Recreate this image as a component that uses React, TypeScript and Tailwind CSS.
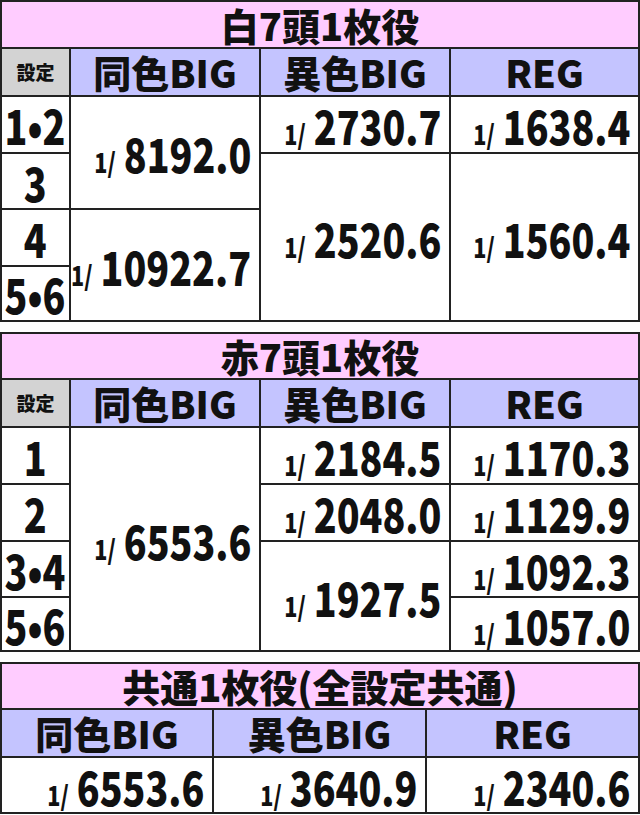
import React from "react"

const FONT = "font-['Noto_Sans_CJK_JP',sans-serif]"

type Val = { v: string; area: string }

// reference digits are condensed, so squeeze them horizontally
function Num({ v, area }: Val) {
  return (
    <div className={`${area} flex items-center justify-end bg-white pr-[8px]`}>
      <span className="inline-block origin-right scale-x-[0.8] leading-none whitespace-nowrap">
        <span className="mr-[10px] text-[27px] font-black">1/</span>
        <span className="text-[47px] font-black">{v}</span>
      </span>
    </div>
  )
}

function Setting({ label, area }: { label: string; area: string }) {
  return (
    <div className={`${area} flex items-center justify-center bg-white`}>
      <span className="inline-block scale-x-[0.8] text-[47px] font-black leading-none whitespace-nowrap">
        {label}
      </span>
    </div>
  )
}

function Title({ text, span }: { text: string; span: string }) {
  return (
    <div className={`${span} flex items-center justify-center bg-[#ffccff] text-[38px] font-black leading-[1.15]`}>
      {text}
    </div>
  )
}

function Head({ text }: { text: string }) {
  return (
    <div className="flex items-center justify-center bg-[#c4c4ff] text-[38px] font-black leading-[1.15]">
      {text}
    </div>
  )
}

function SettingHead() {
  return (
    <div className="flex items-center justify-center bg-[#d3d3d3] text-[19px] font-black">設定</div>
  )
}

export default function App() {
  return (
    <div className={`w-[640px] bg-white text-[#111] ${FONT}`}>
      {/* 白7 */}
      <div className="grid grid-cols-[67px_188px_188px_187px] grid-rows-[45px_46px_55px_54px_55px_53px] gap-[2px] bg-[#222] p-[2px]">
        <Title text="白7頭1枚役" span="col-span-4" />
        <SettingHead />
        <Head text="同色BIG" />
        <Head text="異色BIG" />
        <Head text="REG" />
        <Setting label="1•2" area="col-start-1 row-start-3" />
        <Setting label="3" area="col-start-1 row-start-4" />
        <Setting label="4" area="col-start-1 row-start-5" />
        <Setting label="5•6" area="col-start-1 row-start-6" />
        <Num v="8192.0" area="col-start-2 row-start-3 row-span-2" />
        <Num v="10922.7" area="col-start-2 row-start-5 row-span-2" />
        <Num v="2730.7" area="col-start-3 row-start-3" />
        <Num v="2520.6" area="col-start-3 row-start-4 row-span-3" />
        <Num v="1638.4" area="col-start-4 row-start-3" />
        <Num v="1560.4" area="col-start-4 row-start-4 row-span-3" />
      </div>

      {/* 赤7 */}
      <div className="mt-[10px] grid grid-cols-[67px_188px_188px_187px] grid-rows-[44px_46px_55px_55px_54px_52px] gap-[2px] bg-[#222] p-[2px]">
        <Title text="赤7頭1枚役" span="col-span-4" />
        <SettingHead />
        <Head text="同色BIG" />
        <Head text="異色BIG" />
        <Head text="REG" />
        <Setting label="1" area="col-start-1 row-start-3" />
        <Setting label="2" area="col-start-1 row-start-4" />
        <Setting label="3•4" area="col-start-1 row-start-5" />
        <Setting label="5•6" area="col-start-1 row-start-6" />
        <Num v="6553.6" area="col-start-2 row-start-3 row-span-4" />
        <Num v="2184.5" area="col-start-3 row-start-3" />
        <Num v="2048.0" area="col-start-3 row-start-4" />
        <Num v="1927.5" area="col-start-3 row-start-5 row-span-2" />
        <Num v="1170.3" area="col-start-4 row-start-3" />
        <Num v="1129.9" area="col-start-4 row-start-4" />
        <Num v="1092.3" area="col-start-4 row-start-5" />
        <Num v="1057.0" area="col-start-4 row-start-6" />
      </div>

      {/* 共通 */}
      <div className="mt-[10px] grid grid-cols-[210px_211px_211px] grid-rows-[44px_46px_54px] gap-[2px] bg-[#222] p-[2px]">
        <Title text="共通1枚役(全設定共通)" span="col-span-3" />
        <Head text="同色BIG" />
        <Head text="異色BIG" />
        <Head text="REG" />
        <Num v="6553.6" area="" />
        <Num v="3640.9" area="" />
        <Num v="2340.6" area="" />
      </div>
    </div>
  )
}
